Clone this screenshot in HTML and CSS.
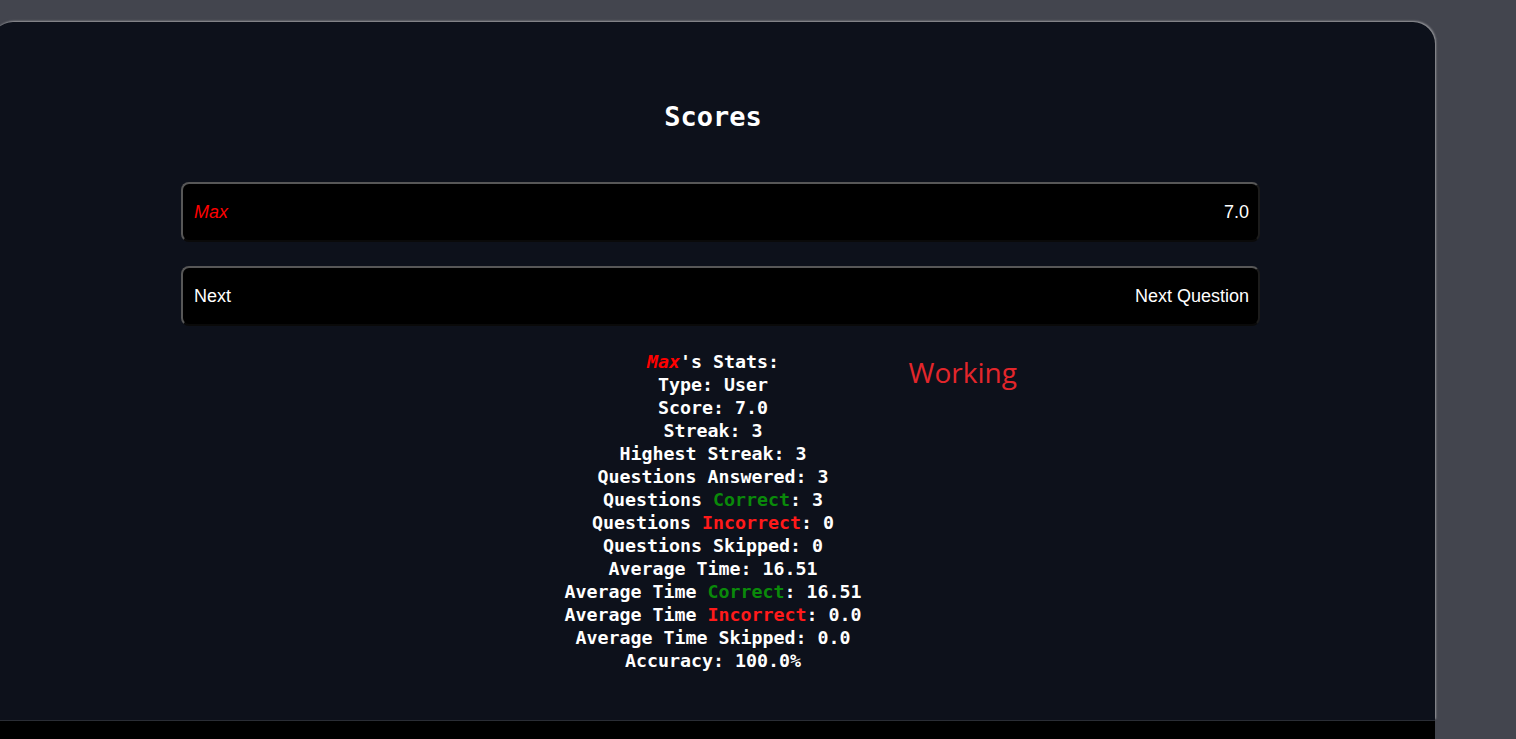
FILE: index.html
```html
<!DOCTYPE html>
<html>
<head>
<meta charset="utf-8">
<link rel="stylesheet" href="styles.css">
</head>
<body>
<div class="page">
  <main class="card">
    <h2 class="title">Scores</h2>
    <div class="rows">
      <div class="row"><span class="name">Max</span><span>7.0</span></div>
      <div class="row"><span>Next</span><span>Next Question</span></div>
    </div>
    <div class="stats-area">
      <div></div>
      <div class="stats">
        <div><span class="name-mono">Max</span>'s Stats:</div>
        <div>Type: User</div>
        <div>Score: 7.0</div>
        <div>Streak: 3</div>
        <div>Highest Streak: 3</div>
        <div>Questions Answered: 3</div>
        <div>Questions <span class="green">Correct</span>: 3</div>
        <div>Questions <span class="red">Incorrect</span>: 0</div>
        <div>Questions Skipped: 0</div>
        <div>Average Time: 16.51</div>
        <div>Average Time <span class="green">Correct</span>: 16.51</div>
        <div>Average Time <span class="red">Incorrect</span>: 0.0</div>
        <div>Average Time Skipped: 0.0</div>
        <div>Accuracy: 100.0%</div>
      </div>
      <div class="status">Working</div>
    </div>
  </main>
  <div class="footer"></div>
</div>
</body>
</html>
```

FILE: styles.css
```css
html, body {
  margin: 0;
  padding: 0;
  background: #43454e;
  height: 100%;
  overflow: hidden;
}
.page {
  padding-top: 22px;
}
.card {
  margin-left: -9px;
  width: 1444px;
  height: 698px;
  box-sizing: border-box;
  background: #0d111b;
  border-radius: 22px 22px 0 0;
  box-shadow: 1px -1px 2px rgba(220, 220, 220, 0.55);
  overflow: hidden;
  color: #fff;
}
.title {
  margin: 0;
  padding-top: 79px;
  height: 32px;
  line-height: 32px;
  text-align: center;
  font-family: "DejaVu Sans Mono", "Liberation Mono", monospace;
  font-size: 27px;
  font-weight: bold;
}
.rows {
  margin: 49px 0 0 190px;
  width: 1079px;
  display: flex;
  flex-direction: column;
  gap: 24px;
}
.row {
  height: 60px;
  box-sizing: border-box;
  display: flex;
  align-items: center;
  justify-content: space-between;
  padding: 0 9px 0 11px;
  background: #000;
  border: 2px solid;
  border-color: #575757 #1c1c1c #0a0a0a #575757;
  border-radius: 8px;
  font-family: "Liberation Sans", Arial, sans-serif;
  font-size: 18px;
}
.name {
  color: #ff0000;
  font-style: italic;
}
.stats-area {
  margin-top: 24px;
  display: grid;
  grid-template-columns: 1fr auto 1fr;
}
.stats {
  text-align: center;
  font-family: "DejaVu Sans Mono", "Liberation Mono", monospace;
  font-size: 18.3px;
  font-weight: bold;
  line-height: 23px;
  white-space: nowrap;
}
.name-mono {
  color: #ff0000;
  font-style: italic;
}
.green {
  color: #0a8a0a;
}
.red {
  color: #ff1a1a;
}
.status {
  margin: 4px 0 0 47px;
  color: #e3262b;
  font-family: "Open Sans", "Noto Sans", sans-serif;
  font-size: 28px;
  line-height: 36px;
}
.footer {
  width: 1435px;
  height: 40px;
  background: #000;
  border-top: 1px solid #2a2d35;
}
```
